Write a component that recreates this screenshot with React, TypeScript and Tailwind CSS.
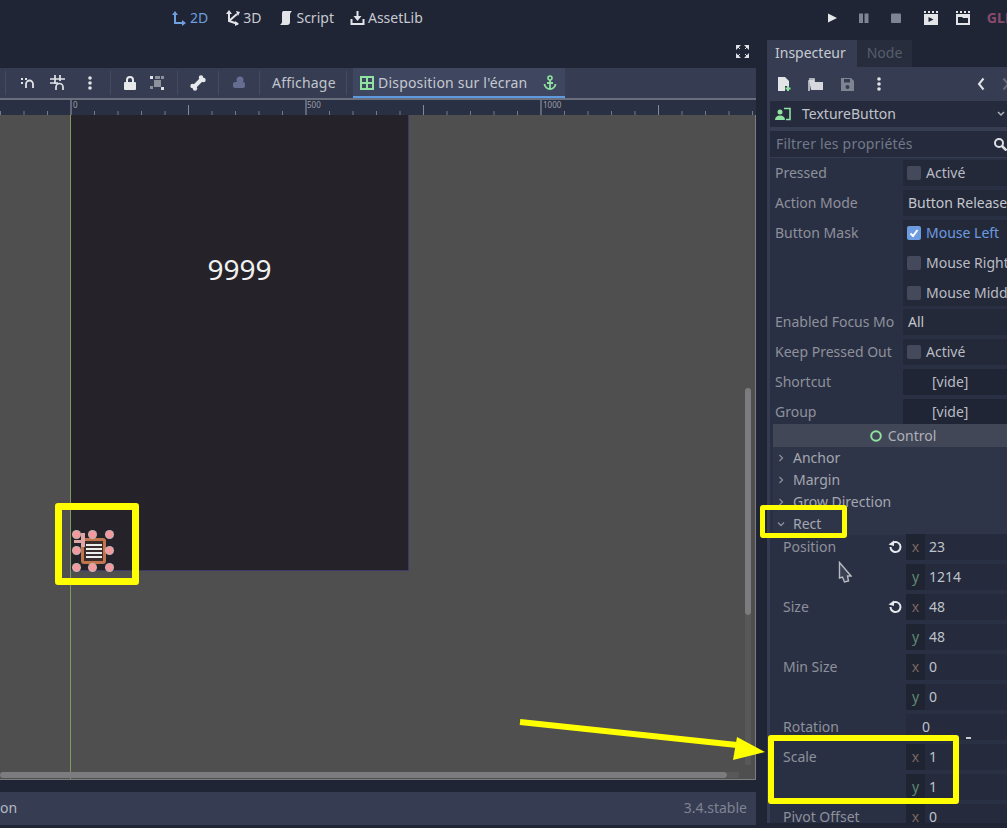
import React from "react";

const font = { fontFamily: '"Noto Sans", sans-serif' };

function Ic({ w = 16, h = 16, children, className = "" }: { w?: number; h?: number; children: React.ReactNode; className?: string }) {
  return (
    <svg width={w} height={h} viewBox={`0 0 ${w} ${h}`} className={`shrink-0 ${className}`}>
      {children}
    </svg>
  );
}

function Sep({ ml }: { ml: string }) {
  return <div className={`w-px h-[24px] bg-[#454c61] shrink-0 ${ml}`} />;
}

function Ruler() {
  const ticks = [];
  for (let i = -3; i < 30; i++) {
    const x = 71 + i * 23.5;
    const major = i % 10 === 0;
    const mid = !major && i % 5 === 0;
    ticks.push(
      <line key={i} x1={x} x2={x} y1={major ? 0 : mid ? 5 : 11} y2={15} stroke={major ? "#9a9ea8" : mid ? "#858996" : "#777b88"} strokeWidth="1" />
    );
  }
  return (
    <svg width="756" height="15" className="block">
      {ticks}
    </svg>
  );
}

function Check({ on = false, label }: { on?: boolean; label: string }) {
  return (
    <div className="flex items-center -ml-[1px]">
      <div className={`w-[14px] h-[14px] shrink-0 rounded-[2px] flex items-center justify-center ${on ? "bg-[#6c9be0]" : "bg-[#444a5c]"}`}>
        {on && (
          <svg width="12" height="12" viewBox="0 0 12 12">
            <path d="M2.5 6.5 5 9l4.5-6" stroke="#fff" strokeWidth="2" fill="none" />
          </svg>
        )}
      </div>
      <span className={`ml-[5px] ${on ? "text-[#6c9be0]" : "text-[#b9bcc5]"}`}>{label}</span>
    </div>
  );
}

function Row({ label, children, field = "bg-[#232939]" }: { label: string; children?: React.ReactNode; field?: string }) {
  return (
    <div className="flex items-center h-[30px]">
      <div className="w-[133px] pl-[5px] shrink-0 text-[#8e919c] overflow-hidden whitespace-nowrap">{label}</div>
      <div className={`flex-1 h-[26px] rounded-l-[2px] flex items-center pl-[5px] whitespace-nowrap overflow-hidden ${field}`}>{children}</div>
    </div>
  );
}

function Section({ label, open = false }: { label: string; open?: boolean }) {
  return (
    <div className="flex items-center h-[22px] text-[#a4a7b0] pl-[4px]">
      <svg width="8" height="8" viewBox="0 0 8 8" className="mr-[8px]">
        {open ? <path d="M1 2.5 4 5.5 7 2.5" stroke="#8a8e99" strokeWidth="1.3" fill="none" /> : <path d="M2.5 1 5.5 4 2.5 7" stroke="#8a8e99" strokeWidth="1.3" fill="none" />}
      </svg>
      {label}
    </div>
  );
}

function Reset() {
  return (
    <svg width="16" height="16" viewBox="0 0 16 16" className="shrink-0">
      <path d="M3.5 8a5 5 0 1 0 2-4" stroke="#e8e9ec" strokeWidth="2" fill="none" />
      <path d="M1.5 5.5 7 7V1.5Z" fill="#e8e9ec" />
    </svg>
  );
}

function Axis({ a, v }: { a: "x" | "y"; v: string }) {
  return (
    <div className="h-[26px] flex items-center mt-[4px] first:mt-0">
      <div className={`w-[19px] h-full flex items-center justify-center bg-[#1f2433] ${a === "x" ? "text-[#7d6660]" : "text-[#5f8a72]"}`}>{a}</div>
      <div className="flex-1 h-full flex items-center pl-[4px] bg-[#252b3c] text-[#bfc2ca]">{v}</div>
    </div>
  );
}

function Vec({ label, x, y, reset = false }: { label: string; x: string; y: string; reset?: boolean }) {
  return (
    <div className="flex h-[60px] items-start">
      <div className="w-[133px] pl-[10px] pt-[3px] shrink-0 text-[#8e919c] flex items-center justify-between pr-[3px]">
        <span>{label}</span>
        {reset && <Reset />}
      </div>
      <div className="flex-1 flex flex-col">
        <Axis a="x" v={x} />
        <Axis a="y" v={y} />
      </div>
    </div>
  );
}

export default function App() {
  return (
    <div className="relative w-[1007px] h-[828px] overflow-hidden bg-[#1f2535] text-[14px] leading-[20px] text-[#c8cad1]" style={font}>
      {/* top bar */}
      <header className="h-[40px] flex items-center pb-[4px]">
        <div className="ml-[171px] flex items-center text-[#6f9fde]">
          <Ic w={15} h={16}>
            <path d="M4 14V3M4 13h9" stroke="#6f9fde" strokeWidth="2" fill="none" />
            <path d="M1 5 4 1l3 4ZM11 10l4 3-4 3Z" fill="#6f9fde" />
          </Ic>
          <span className="ml-[4px]">2D</span>
        </div>
        <div className="ml-[17px] flex items-center">
          <Ic w={15} h={16}>
            <path d="M4 2v9l9 3M4 11l8-7" stroke="#e3e4e8" strokeWidth="2" fill="none" />
            <path d="M1 4 4 0l3 4ZM11 1l4 1-2 4ZM10 11l4 3-4 2Z" fill="#e3e4e8" />
          </Ic>
          <span className="ml-[3px]">3D</span>
        </div>
        <div className="ml-[17px] flex items-center">
          <Ic w={15} h={16}>
            <path d="M5 1h9c-1 1-2 2-2 4v7c0 2-1 3-3 3H2c1-1 2-2 2-3V4C4 3 4 2 5 1Z" fill="#e3e4e8" />
          </Ic>
          <span className="ml-[3px]">Script</span>
        </div>
        <div className="ml-[16px] flex items-center">
          <Ic w={15} h={16}>
            <path d="M7.5 1v8" stroke="#e3e4e8" strokeWidth="2" />
            <path d="M3.5 6h8l-4 5Z" fill="#e3e4e8" />
            <path d="M1.5 9v5h12V9" stroke="#e3e4e8" strokeWidth="2" fill="none" />
          </Ic>
          <span className="ml-[3px]">AssetLib</span>
        </div>
        <div className="ml-[403px] flex items-center">
          <Ic w={12} h={12}>
            <path d="M2 1.5 11 6l-9 4.5Z" fill="#e6e7ea" />
          </Ic>
          <Ic w={12} h={12} className="ml-[20px]">
            <rect x="1" y="1.5" width="4" height="9.5" fill="#7f8492" />
            <rect x="6.5" y="1.5" width="4" height="9.5" fill="#7f8492" />
          </Ic>
          <Ic w={12} h={12} className="ml-[20px]">
            <rect x="1" y="1.5" width="10" height="9.5" rx="1" fill="#7f8492" />
          </Ic>
          <Ic w={16} h={16} className="ml-[21px]">
            <path d="M1 1h2v2H1ZM5 1h2v2H5ZM9 1h2v2H9ZM13 1h2v2h-2Z" fill="#e3e4e8" />
            <path d="M1 4h14v11H1Z" fill="#e3e4e8" />
            <path d="M5.500 7l5 2.500-5 2.500Z" fill="#1f2535" />
          </Ic>
          <Ic w={16} h={16} className="ml-[16px]">
            <path d="M1 1h2v2H1ZM5 1h2v2H5ZM9 1h2v2H9ZM13 1h2v2h-2Z" fill="#e3e4e8" />
            <path d="M1 4h14v11H1Z" fill="#e3e4e8" />
            <path d="M3 7h4l1 1h5v5H3Z" fill="#1f2535" />
          </Ic>
          <span className="ml-[16px] font-bold text-[#8a4a6c]">GLES3</span>
        </div>
      </header>

      <div className="flex">
        {/* left column */}
        <main className="w-[756px] shrink-0">
          <div className="h-[28px] flex items-start justify-end pt-[4px] pr-[6px]">
            <Ic w={15} h={15}>
              <path d="M1 1h5L1 6ZM14 1H9l5 5ZM1 14h5l-5-5ZM14 14H9l5-5Z" fill="#dfe0e5" />
              <path d="M2 2l3 3M13 2l-3 3M2 13l3-3M13 13l-3-3" stroke="#dfe0e5" />
            </Ic>
          </div>
          {/* toolbar */}
          <div className="h-[32px] bg-[#363d52] flex items-center border-b-2 border-[#6a6f7d]">
            <Sep ml="ml-[5px]" />
            <Ic w={14} h={14} className="ml-[15px]">
              <path d="M5 12V8a3 3 0 0 1 7 0v4" stroke="#e2e3e7" strokeWidth="1.8" fill="none" />
              <rect x="0" y="2" width="2" height="2" fill="#e2e3e7" />
              <rect x="4" y="2" width="2" height="2" fill="#e2e3e7" />
              <rect x="0" y="6" width="2" height="2" fill="#e2e3e7" />
            </Ic>
            <Ic w={16} h={16} className="ml-[15px]">
              <path d="M5 0v9M10 0v6M0 4h15M0 8h8M6 15v-3a3 3 0 0 1 7 0v3" stroke="#e2e3e7" strokeWidth="1.7" fill="none" />
            </Ic>
            <Ic w={4} h={16} className="ml-[22px]">
              <circle cx="2" cy="3" r="1.8" fill="#e2e3e7" />
              <circle cx="2" cy="8" r="1.8" fill="#e2e3e7" />
              <circle cx="2" cy="13" r="1.8" fill="#e2e3e7" />
            </Ic>
            <Sep ml="ml-[18px]" />
            <Ic w={14} h={16} className="ml-[12px]">
              <path d="M4 7V5a3 3 0 0 1 6 0v2" stroke="#e8e9ec" strokeWidth="2" fill="none" />
              <rect x="1" y="7" width="12" height="8" rx="1" fill="#e8e9ec" />
            </Ic>
            <Ic w={16} h={16} className="ml-[12px]">
              <rect x="5" y="5" width="7" height="7" fill="#8d919c" />
              <rect x="1" y="1" width="3" height="3" fill="#e2e3e7" />
              <rect x="12" y="1" width="3" height="3" fill="#8d919c" />
              <rect x="6" y="1" width="5" height="3" fill="#8d919c" />
              <rect x="1" y="11" width="3" height="3" fill="#8d919c" />
              <rect x="12" y="12" width="3" height="3" fill="#e2e3e7" />
            </Ic>
            <Sep ml="ml-[12px]" />
            <Ic w={16} h={16} className="ml-[12px]">
              <path d="M3.5 12.5 12.5 3.5" stroke="#e8e9ec" strokeWidth="4" />
              <circle cx="11" cy="2.5" r="2.2" fill="#e8e9ec" />
              <circle cx="13.5" cy="5" r="2.2" fill="#e8e9ec" />
              <circle cx="2.5" cy="11" r="2.2" fill="#e8e9ec" />
              <circle cx="5" cy="13.5" r="2.2" fill="#e8e9ec" />
            </Ic>
            <Sep ml="ml-[12px]" />
            <Ic w={14} h={14} className="ml-[13px]">
              <circle cx="8" cy="4" r="3.5" fill="#656d91" />
              <rect x="1" y="6" width="12" height="6" rx="2" fill="#656d91" />
            </Ic>
            <Sep ml="ml-[13px]" />
            <span className="ml-[12px] w-[63px] text-[#c2c5cc] tracking-[0.2px] whitespace-nowrap">Affichage</span>
            <Sep ml="ml-[11px]" />
            <div className="ml-[6px] w-[212px] h-full flex items-center bg-[#3f4760] border-b-2 border-[#5d9ae0] pt-[2px] pl-[7px]">
              <Ic w={14} h={14}>
                <path d="M1 1h12v12H1ZM7 1v12M1 7h12" stroke="#8fe29f" strokeWidth="2" fill="none" />
              </Ic>
              <span className="ml-[4px] text-[#c6c9d0] whitespace-nowrap tracking-[0.2px]">Disposition sur l'écran</span>
              <Ic w={14} h={16} className="ml-auto mr-[8px]">
                <circle cx="7" cy="3" r="2" stroke="#8fe29f" strokeWidth="1.6" fill="none" />
                <path d="M7 5v9M4 8h6M1.5 9c0 3 3 5 5.5 5s5.5-2 5.5-5" stroke="#8fe29f" strokeWidth="1.8" fill="none" />
              </Ic>
            </div>
          </div>
          {/* ruler */}
          <div className="relative h-[15px] bg-[#2a3043] overflow-hidden">
            <Ruler />
            <span className="absolute left-[73px] top-0 text-[8px] leading-[10px] text-[#9a9ea8]">0</span>
            <span className="absolute left-[307px] top-0 text-[8px] leading-[10px] text-[#9a9ea8]">500</span>
            <span className="absolute left-[543px] top-0 text-[8px] leading-[10px] text-[#9a9ea8]">1000</span>
          </div>
          {/* canvas */}
          <div className="relative h-[665px] bg-[#4f4f4f] overflow-hidden border-r border-b border-[#7b7c80]">
            <div className="absolute left-[71px] top-0 w-[338px] h-[456px] bg-[#252329] border-b border-r border-[#3c3a66] flex items-start justify-center pt-[136px]">
              <span className="text-[28px] leading-[36px] text-[#f1f1f2]">9999</span>
            </div>
            <div className="absolute left-[70px] top-0 w-px h-full bg-[#7e9a5c]" />
            {/* selected button */}
            <div className="absolute left-[81px] top-[423px] w-[25px] h-[26px] rounded-[3px] border-[3px] border-[#c2744c] bg-[#3a2c2a] flex flex-col items-center justify-center gap-[2px]">
              <div className="w-[16px] h-[2px] shrink-0 bg-[#eceded]" />
              <div className="w-[16px] h-[2px] shrink-0 bg-[#eceded]" />
              <div className="w-[16px] h-[2px] shrink-0 bg-[#eceded]" />
              <div className="w-[16px] h-[2px] shrink-0 bg-[#eceded]" />
            </div>
            <div className="absolute left-[74px] top-[425px] w-[11px] h-[3px] bg-[#e0a5a5]" />
            <div className="absolute left-[81px] top-[418px] w-[4px] h-[14px] bg-[#e0a5a5]" />
            {[76, 92, 109].flatMap((x) =>
              [419, 435, 452]
                .filter((y) => !(x === 92 && y === 435))
                .map((y) => (
                  <div key={`${x}-${y}`} style={{ left: x - 3.5, top: y - 3.5 }} className="absolute w-[7px] h-[7px] rounded-full bg-[#f29a9e] ring-1 ring-[#c9b4b4]" />
                ))
            )}
            {/* scrollbars */}
            <div className="absolute left-[745px] top-[273px] w-[6px] h-[227px] rounded-[3px] bg-[#7c7c7e]" />
            <div className="absolute left-[745px] top-[500px] w-[6px] h-[150px] bg-[#585858]" />
            <div className="absolute left-0 top-[657px] w-[727px] h-[6px] rounded-[3px] bg-[#7c7c7e]" />
            <div className="absolute left-[727px] top-[657px] w-[12px] h-[6px] bg-[#585858]" />
          </div>
          {/* status */}
          <div className="mt-[12px] h-[33px] bg-[#363d52] flex items-center justify-between pr-[9px] pb-[2px]">
            <span className="text-[#b5b8c1]">on</span>
            <span className="text-[#7e8494]">3.4.stable</span>
          </div>
        </main>

        {/* inspector */}
        <aside className="ml-[11px] w-[240px] shrink-0">
          <div className="h-[27px] flex items-stretch">
            <div className="w-[90px] bg-[#363d52] flex items-center pl-[8px] pb-[2px] text-[#c8cad1]">Inspecteur</div>
            <div className="w-[55px] bg-[#272d3d] flex items-center justify-center pb-[2px] text-[#585e6d]">Node</div>
          </div>
          <div className="h-[756px] bg-[#363d52] pl-[3px] overflow-hidden">
            <div className="h-[34px] flex items-center pl-[7px]">
              <Ic w={15} h={16}>
                <path d="M1 1h7l4 4v5H8v5H1Z" fill="#e3e4e8" />
                <path d="M11 10v5M8.5 12.5h5" stroke="#8fe29f" strokeWidth="2" />
              </Ic>
              <Ic w={16} h={14} className="ml-[16px]">
                <path d="M1 3h5l1 2h8v8H3Z" fill="#d7d8dd" />
                <path d="M1 2h5v2H1v10" stroke="#d7d8dd" strokeWidth="1.5" fill="none" />
              </Ic>
              <Ic w={15} h={15} className="ml-[16px]">
                <path d="M1 1h10l3 3v10H1Z" fill="#7f8492" />
                <rect x="4" y="2" width="6" height="3.5" fill="#363d52" />
                <circle cx="7.5" cy="10" r="2" fill="#363d52" />
              </Ic>
              <Ic w={4} h={16} className="ml-[22px]">
                <circle cx="2" cy="3" r="1.8" fill="#e2e3e7" />
                <circle cx="2" cy="8" r="1.8" fill="#e2e3e7" />
                <circle cx="2" cy="13" r="1.8" fill="#e2e3e7" />
              </Ic>
              <Ic w={8} h={14} className="ml-[96px]">
                <path d="M6.5 1.5 2 7l4.5 5.5" stroke="#e3e4e8" strokeWidth="2" fill="none" />
              </Ic>
              <Ic w={8} h={14} className="ml-[17px]">
                <path d="M1.5 1.5 6 7l-4.5 5.5" stroke="#666c7c" strokeWidth="2" fill="none" />
              </Ic>
            </div>
            <div className="h-[26px] bg-[#252b3c] flex items-center pl-[4px] pr-[1px] text-[#c0c3cb]">
              <Ic w={17} h={14}>
                <circle cx="6" cy="5" r="2.5" fill="#8fe29f" />
                <path d="M1 13c0-3 2-4.500 5-4.500s5 1.500 5 4.500Z" fill="#8fe29f" />
                <path d="M10 1.500h6v11h-4" stroke="#8fe29f" strokeWidth="1.600" fill="none" />
              </Ic>
              <span className="ml-[11px]">TextureButton</span>
              <Ic w={10} h={8} className="ml-auto">
                <path d="M2 2l3 3 3-3" stroke="#aeb1ba" strokeWidth="1.500" fill="none" />
              </Ic>
            </div>
            <div className="mt-[4px] h-[26px] bg-[#252b3c] flex items-center pl-[6px] text-[#73798a]">
              <span className="tracking-[0.2px]">Filtrer les propriétés</span>
              <Ic w={14} h={14} className="ml-auto">
                <circle cx="6" cy="6" r="4" stroke="#dfe0e5" strokeWidth="2" fill="none" />
                <path d="M9 9l4.500 4.500" stroke="#dfe0e5" strokeWidth="2.500" />
              </Ic>
            </div>
            <div className="mt-[1px] bg-[#2a3043]">
              <Row label="Pressed"><Check label="Activé" /></Row>
              <Row label="Action Mode"><span className="text-[#c3c6cd]">Button Release</span></Row>
              <div className="flex">
                <div className="w-[133px] pl-[5px] pt-[5px] shrink-0 text-[#8e919c]">Button Mask</div>
                <div className="flex-1 bg-[#232939] pl-[5px] pt-[3px] h-[86px] mt-[2px] flex flex-col gap-[10px] whitespace-nowrap overflow-hidden">
                  <Check on label="Mouse Left" />
                  <Check label="Mouse Right" />
                  <Check label="Mouse Middle" />
                </div>
              </div>
              <div className="h-[1px]" />
              <Row label="Enabled Focus Mo"><span className="text-[#c3c6cd]">All</span></Row>
              <Row label="Keep Pressed Out"><Check label="Activé" /></Row>
              <Row label="Shortcut" field="bg-[#1f2534]"><span className="ml-[24px] text-[#b9bcc5]">[vide]</span></Row>
              <Row label="Group" field="bg-[#1f2534]"><span className="ml-[24px] text-[#b9bcc5]">[vide]</span></Row>
              <div className="ml-[3px]">
                <div className="relative h-[23px] -mt-[3px] bg-[#414756] flex items-center justify-center text-[#aeb1ba] pl-[26px]">
                  <svg width="12" height="12" viewBox="0 0 12 12" className="mr-[6px]">
                    <circle cx="6" cy="6" r="4.800" stroke="#8fe29f" strokeWidth="2" fill="none" />
                  </svg>
                  Control
                </div>
                <div className="bg-[#2f3548]">
                  <Section label="Anchor" />
                  <Section label="Margin" />
                  <Section label="Grow Direction" />
                  <Section label="Rect" open />
                </div>
                <div className="-mt-[1px]">
                  <Vec label="Position" x="23" y="1214" reset />
                  <Vec label="Size" x="48" y="48" reset />
                  <Vec label="Min Size" x="0" y="0" />
                  <div className="flex h-[30px]">
                    <div className="w-[133px] pl-[10px] pt-[3px] shrink-0 text-[#8e919c]">Rotation</div>
                    <div className="relative flex-1 h-[26px] flex items-center bg-[#252b3c] text-[#bfc2ca] pl-[16px]">
                      0
                      <div className="absolute left-[60px] top-[23px] w-[5px] h-[2px] bg-[#c8cad1]" />
                    </div>
                  </div>
                  <Vec label="Scale" x="1" y="1" />
                  <div className="flex h-[20px] leading-[13px] pt-[6px]">
                    <div className="w-[133px] pl-[10px] shrink-0 text-[#8e919c]">Pivot Offset</div>
                    <div className="w-[19px] -mt-[6px] pt-[6px] text-center bg-[#1f2433] text-[#7d6660]">x</div>
                    <div className="flex-1 -mt-[6px] pt-[6px] pl-[4px] bg-[#252b3c] text-[#bfc2ca]">0</div>
                  </div>
                </div>
              </div>
            </div>
          </div>
        </aside>
      </div>

      {/* annotations */}
      <div className="absolute left-[55px] top-[503px] w-[84px] h-[82px] border-[7px] border-[#ffff00] rounded-[3px]" />
      <div className="absolute left-[760px] top-[505px] w-[87px] h-[33px] border-[5px] border-[#ffff00] rounded-[3px]" />
      <div className="absolute left-[768px] top-[735px] w-[191px] h-[69px] border-[6px] border-[#ffff00] rounded-[3px]" />
      <svg className="absolute left-[515px] top-[712px]" width="255" height="52" viewBox="0 0 255 52">
        <path d="M5 10 222 33" stroke="#ffff00" strokeWidth="6" />
        <path d="M222 25 250 40 218 48Z" fill="#ffff00" />
      </svg>
      {/* cursor */}
      <svg className="absolute left-[838px] top-[561px]" width="14" height="24" viewBox="0 0 14 24">
        <path d="M1.500 1.500V17l3-1 2 5 4-1-1-5h3.500Z" fill="#3a4154" stroke="#b9bbc2" strokeWidth="1.400" />
      </svg>
    </div>
  );
}
